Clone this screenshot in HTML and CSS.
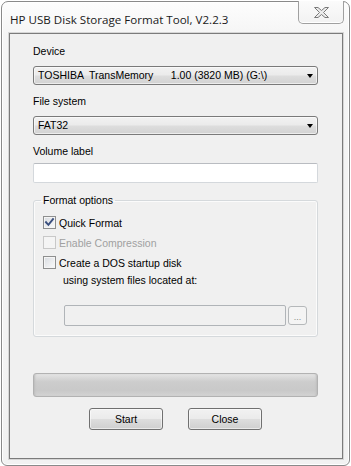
FILE: index.html
```html
<!DOCTYPE html>
<html>
<head>
<meta charset="utf-8">
<title>HP USB Disk Storage Format Tool</title>
<link rel="stylesheet" href="styles.css">
</head>
<body>
<div class="window">
  <div class="titlebar">
    <span class="title">HP USB Disk Storage Format Tool, V2.2.3</span>
    <div class="close-btn">
      <svg width="15" height="11" viewBox="0 0 15 11"><path d="M0.5 0.5 H4 L7.5 3.5 L11 0.5 H14.5 L9.5 5.5 L14.5 10.5 H11 L7.5 7.5 L4 10.5 H0.5 L5.5 5.5 Z" fill="#ececec" stroke="#7a7a7a" stroke-width="1" stroke-linejoin="round"/></svg>
    </div>
  </div>
  <div class="client">
    <div class="label">Device</div>
    <div class="combo"><span class="combo-text">TOSHIBA  TransMemory      1.00 (3820 MB) (G:\)</span><span class="arrow"></span></div>
    <div class="label">File system</div>
    <div class="combo"><span class="combo-text">FAT32</span><span class="arrow"></span></div>
    <div class="label">Volume label</div>
    <div class="textbox"></div>
    <fieldset class="group">
      <legend class="group-title">Format options</legend>
      <div class="check-row first">
        <span class="cb">
          <svg width="11" height="11" viewBox="0 0 11 11"><path d="M2 5.2 L4.4 7.8 L9 2.2" fill="none" stroke="#3a4f7e" stroke-width="1.9" stroke-linecap="square"/></svg>
        </span>
        <span>Quick Format</span>
      </div>
      <div class="check-row disabled">
        <span class="cb"></span>
        <span>Enable Compression</span>
      </div>
      <div class="check-row">
        <span class="cb"></span>
        <span>Create a DOS startup disk</span>
      </div>
      <div class="sub-text">using system files located at:</div>
      <div class="path-row">
        <div class="path-box"></div>
        <div class="browse">...</div>
      </div>
    </fieldset>
    <div class="progress"></div>
    <div class="buttons">
      <button class="btn">Start</button>
      <button class="btn">Close</button>
    </div>
  </div>
</div>
</body>
</html>
```
FILE: styles.css
```css
* { box-sizing: border-box; }
html, body { margin: 0; padding: 0; background: #ffffff; }
body {
  width: 351px;
  height: 466px;
  overflow: hidden;
  font-family: "Liberation Sans", Arial, sans-serif;
  font-size: 10.5px;
  color: #000;
}
.window {
  margin: 1px 0 0 1px;
  width: 349px;
  height: 465px;
  border: 1px solid #8a8a8a;
  border-radius: 7px 7px 6px 6px;
  background: linear-gradient(#fdfdfd, #f5f5f5 32px, #f2f2f2);
  box-shadow: inset 0 0 0 1px #ffffff;
  padding: 0 6px 6px 7px;
  display: flex;
  flex-direction: column;
}
.titlebar {
  height: 31px;
  display: flex;
  justify-content: space-between;
  align-items: flex-start;
}
.title {
  font-family: "Open Sans", "Noto Sans", sans-serif;
  font-size: 11.6px;
  line-height: 16px;
  margin: 10px 0 0 1px;
  color: #1a1a1a;
}
.close-btn {
  width: 46px;
  height: 23px;
  margin: -1px -1px 0 0;
  border: 1px solid #a0a0a0;
  border-top: none;
  border-radius: 0 0 5px 5px;
  background: linear-gradient(#fbfbfb, #f2f2f2);
  box-shadow: inset 0 -1px 0 #ffffff;
  display: flex;
  align-items: center;
  justify-content: center;
  padding-top: 1px;
}
.client {
  width: 334px;
  height: 426px;
  border: 1px solid #7b7b7b;
  box-shadow: 0 0 0 1px #d6d6d6;
  background: #f0f0f0;
  padding: 11px 24px 0 23px;
  display: flex;
  flex-direction: column;
}
.label {
  height: 13px;
  line-height: 13px;
}
.combo {
  margin: 8px 0 8px;
  height: 19px;
  border: 1px solid #7a7a7a;
  border-radius: 3px;
  background: linear-gradient(#f2f2f2, #ebebeb 45%, #dddddd 55%, #d2d2d2);
  box-shadow: inset 0 0 0 1px rgba(255,255,255,0.6);
  display: flex;
  align-items: center;
  justify-content: space-between;
  padding: 0 4px 0 4px;
}
.combo + .label { margin-top: 2px; }
.label + .combo { margin-top: 8px; }
.combo-text {
  white-space: pre;
  line-height: 13px;
}
.arrow {
  width: 0;
  height: 0;
  border-left: 3.5px solid transparent;
  border-right: 3.5px solid transparent;
  border-top: 4px solid #000;
}
.textbox {
  margin-top: 5px;
  height: 20px;
  background: #fff;
  border: 1px solid #d4d8dc;
  border-top-color: #b9bcc1;
  border-radius: 2px;
}
.group {
  margin: 11px 0 0;
  padding: 0 0 10px 9px;
  border: 1px solid #d5d9dc;
  border-radius: 3px;
  box-shadow: inset 0 0 0 1px #fbfbfb;
  min-width: 0;
}
.group-title {
  padding: 0 2px;
  margin-left: -2px;
  line-height: 13px;
  height: 13px;
}
.check-row {
  height: 19px;
  margin-top: 1px;
  display: flex;
  align-items: center;
  gap: 3px;
}
.check-row.first { margin-top: 6px; }
.cb {
  width: 13px;
  height: 13px;
  border: 1px solid #8e8f8f;
  background: linear-gradient(135deg, #d8dbe0, #f4f5f6 80%);
  box-shadow: inset 0 0 0 1px #f5f5f5;
  display: flex;
  align-items: center;
  justify-content: center;
}
.check-row.disabled { color: #a0a0a0; }
.check-row.disabled .cb {
  border-color: #c8c8c8;
  background: #f4f4f4;
  box-shadow: none;
}
.sub-text {
  margin: 2px 0 0 20px;
  height: 13px;
  line-height: 13px;
}
.path-row {
  margin: 18px 0 0 21px;
  display: flex;
  align-items: center;
  gap: 2px;
}
.path-box {
  width: 222px;
  height: 21px;
  border: 1px solid #b0b4b8;
  border-radius: 2px;
  background: #f0f0f0;
}
.browse {
  width: 19px;
  height: 19px;
  border: 1px solid #b5b8ba;
  border-radius: 3px;
  background: #f4f4f4;
  color: #8a8a8a;
  font-size: 9px;
  text-align: center;
  line-height: 20px;
}
.progress {
  margin-top: 36px;
  height: 24px;
  border: 1px solid #b2b2b2;
  border-radius: 3px;
  background: linear-gradient(#e4e4e4, #cdcdcd 35%, #c9c9c9 75%, #d3d3d3);
  box-shadow: inset 2px 0 2px -1px #bdbdbd, inset -2px 0 2px -1px #bdbdbd;
}
.buttons {
  margin-top: 11px;
  display: flex;
  justify-content: center;
  gap: 25px;
}
.btn {
  width: 74px;
  height: 22px;
  margin: 0;
  padding: 0;
  border: 1px solid #707070;
  border-radius: 3px;
  background: linear-gradient(#f2f2f2, #ebebeb 48%, #dddddd 52%, #cfcfcf);
  box-shadow: inset 0 0 0 1px rgba(255,255,255,0.55);
  font-family: "Liberation Sans", Arial, sans-serif;
  font-size: 10.5px;
  color: #000;
  line-height: 20px;
}
```
